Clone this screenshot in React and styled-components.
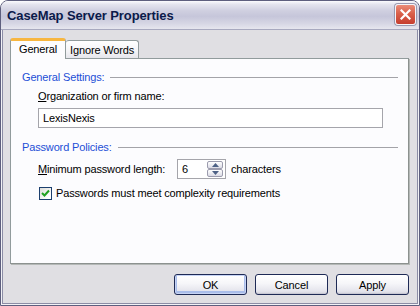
import React, {useState} from 'react';
import styled, {createGlobalStyle} from 'styled-components';

const GlobalStyle = createGlobalStyle`
  html, body {
    margin: 0;
    padding: 0;
    background: #ffffff;
  }
  body {
    font-family: "Liberation Sans", Arial, sans-serif;
    font-size: 11px;
    letter-spacing: -0.15px;
    color: #000;
  }
`

const Window = styled.div`
  width: 420px;
  height: 306px;
  box-sizing: border-box;
  display: flex;
  flex-direction: column;
  border: 1px solid #5e5f7e;
  border-radius: 8px 8px 0 0;
  overflow: hidden;
  background: #e8e8f0;
`

const TitleBar = styled.div`
  height: 28px;
  flex: none;
  display: flex;
  align-items: center;
  justify-content: space-between;
  padding: 0 3px 0 6px;
  background: linear-gradient(to bottom, #fbfbfd 0%, #e4e4ee 12%, #cfcfe0 35%, #c6c6da 55%, #d6d6e4 80%, #e6e6ee 100%);
  border-bottom: 1px solid #a8a9bf;
`

const Title = styled.span`
  font-family: "Liberation Sans", Arial, sans-serif;
  font-weight: bold;
  font-size: 13px;
  color: #0b1a4a;
  letter-spacing: -0.1px;
  padding-top: 1px;
`

const CloseButton = styled.div`
  width: 21px;
  height: 21px;
  box-sizing: border-box;
  border: 1px solid #f4f4f8;
  border-radius: 3px;
  background: linear-gradient(to bottom, #eb8c78 0%, #d9604a 45%, #c63e2f 100%);
  box-shadow: 0 0 0 1px #9a9ab0;
  display: flex;
  align-items: center;
  justify-content: center;
  margin-top: -2px;
`

const Frame = styled.div`
  flex: 1;
  display: flex;
  padding: 0 1px 1px;
  background: #f2f2f6;
`

const Client = styled.div`
  flex: 1;
  display: flex;
  flex-direction: column;
  background: #e0dfe3;
  border: 1px solid #8c8da6;
  border-top: none;
  padding: 8px 8px 8px 7px;
`

const TabStrip = styled.div`
  display: flex;
  align-items: flex-end;
  height: 21px;
  position: relative;
  z-index: 1;
  margin-bottom: -1px;
`

const Tab = styled.div`
  box-sizing: border-box;
  display: flex;
  align-items: center;
  justify-content: center;
  border: 1px solid #919b9c;
  border-bottom: none;
  border-radius: 3px 3px 0 0;
  height: ${p => p.$active ? '21px' : '18px'};
  padding: ${p => p.$active ? '0 8px 3px' : '0 4px'};
  background: ${p => p.$active
    ? '#fcfcfe'
    : 'linear-gradient(to bottom, #ffffff 0%, #f3f3f6 60%, #e6e6ec 100%)'};
  border-top: ${p => p.$active ? '3px solid #f7b640' : '1px solid #919b9c'};
  margin-bottom: ${p => p.$active ? '0' : '1px'};
  ${p => !p.$active && 'border-left: none;'}
`

const Panel = styled.div`
  height: 206px;
  box-sizing: border-box;
  background: #fcfcfe;
  border: 1px solid #919b9c;
  border-right-color: #8c918f;
  border-bottom-color: #8c918f;
  box-shadow: 1px 1px 0 #b4b8b6;
  padding: 11px 10px 0 11px;
  display: flex;
  flex-direction: column;
`

const GroupHeader = styled.div`
  display: flex;
  align-items: center;
  gap: 6px;
  line-height: 14px;
  color: #1d4fd6;
  margin-top: ${p => p.$gap || 0}px;
`

const GroupLine = styled.div`
  flex: 1;
  height: 1px;
  background: #a3a3a8;
`

const Indented = styled.div`
  padding-left: 16px;
  display: flex;
  flex-direction: column;
`

const Label = styled.label`
  line-height: 14px;
  margin-top: 5px;
  width: ${p => p.$width ? p.$width + 'px' : 'auto'};
  flex: none;
  u { text-decoration: underline; }
`

const TextBox = styled.input`
  box-sizing: border-box;
  width: 345px;
  height: 20px;
  margin-top: 5px;
  border: 1px solid #a5a5ab;
  background: #ffffff;
  font-family: "Liberation Sans", Arial, sans-serif;
  font-size: 11px;
  letter-spacing: -0.15px;
  padding: 0 4px;
  outline: none;
`

const Row = styled.div`
  display: flex;
  align-items: center;
  margin-top: ${p => p.$gap || 0}px;
  height: ${p => p.$h || 14}px;
`

const SpinBox = styled.div`
  box-sizing: border-box;
  width: 49px;
  height: 20px;
  border: 1px solid #a5a5ab;
  background: #ffffff;
  display: flex;
  align-items: center;
  padding: 1px 2px 1px 4px;
  gap: 2px;
`

const SpinValue = styled.span`
  flex: 1;
`

const SpinButtons = styled.div`
  display: flex;
  flex-direction: column;
`

const SpinButton = styled.div`
  box-sizing: border-box;
  width: 16px;
  height: 8px;
  border: 1px solid #9c9cae;
  border-radius: 2px;
  background: linear-gradient(to bottom, #ffffff, #dcdce6);
  display: flex;
  align-items: center;
  justify-content: center;
`

const Suffix = styled.span`
  margin-left: 5px;
`

const CheckBox = styled.div`
  box-sizing: border-box;
  width: 13px;
  height: 13px;
  border: 1px solid #1c3f6e;
  background: linear-gradient(135deg, #dcdcd7 0%, #ffffff 80%);
  margin: 0 4px 0 1px;
  display: flex;
  align-items: center;
  justify-content: center;
`

const ButtonBar = styled.div`
  display: flex;
  justify-content: flex-end;
  gap: 8px;
  margin-top: 10px;
`

const PushButton = styled.button`
  box-sizing: border-box;
  width: 73px;
  height: 21px;
  border: 1px solid #1e2a55;
  border-radius: 3px;
  background: linear-gradient(to bottom, #ffffff 0%, #f6f6f9 45%, #e4e4ec 85%, #d2d2dc 100%);
  font-family: "Liberation Sans", Arial, sans-serif;
  font-size: 11px;
  letter-spacing: -0.15px;
  color: #000;
  padding: 0;
  box-shadow: ${p => p.$default
    ? 'inset 0 0 0 1px #c6d3f4, inset 0 -1px 0 2px #a9bdea'
    : 'inset 0 -1px 0 #c8c8d4'};
`

const App = () => {
  const [firm, setFirm] = useState('LexisNexis')

  return (
    <>
      <GlobalStyle/>
      <Window>
        <TitleBar>
          <Title>CaseMap Server Properties</Title>
          <CloseButton>
            <svg width="11" height="11" viewBox="0 0 11 11">
              <path d="M1.5 1.5 L9.5 9.5 M9.5 1.5 L1.5 9.5" stroke="#ffffff" strokeWidth="2.2" strokeLinecap="square"/>
            </svg>
          </CloseButton>
        </TitleBar>
        <Frame>
          <Client>
            <TabStrip>
              <Tab $active>General</Tab>
              <Tab>Ignore Words</Tab>
            </TabStrip>
            <Panel>
              <GroupHeader>General Settings:<GroupLine/></GroupHeader>
              <Indented>
                <Label><u>O</u>rganization or firm name:</Label>
                <TextBox value={firm} onChange={(e)=> setFirm(e.target.value)}/>
              </Indented>
              <GroupHeader $gap={12}>Password Policies:<GroupLine/></GroupHeader>
              <Indented>
                <Row $gap={5} $h={20}>
                  <Label $width={139} style={{marginTop: 0}}><u>M</u>inimum password length:</Label>
                  <SpinBox>
                    <SpinValue>6</SpinValue>
                    <SpinButtons>
                      <SpinButton>
                        <svg width="7" height="4" viewBox="0 0 7 4"><path d="M0 4 L3.5 0 L7 4 Z" fill="#4d6185"/></svg>
                      </SpinButton>
                      <SpinButton>
                        <svg width="7" height="4" viewBox="0 0 7 4"><path d="M0 0 L3.5 4 L7 0 Z" fill="#4d6185"/></svg>
                      </SpinButton>
                    </SpinButtons>
                  </SpinBox>
                  <Suffix>characters</Suffix>
                </Row>
                <Row $gap={7}>
                  <CheckBox>
                    <svg width="9" height="9" viewBox="0 0 9 9">
                      <path d="M1 4 L3.5 6.5 L8 1.5" stroke="#21a121" strokeWidth="2" fill="none"/>
                    </svg>
                  </CheckBox>
                  <span>Passwords must meet complexity requirements</span>
                </Row>
              </Indented>
            </Panel>
            <ButtonBar>
              <PushButton $default>OK</PushButton>
              <PushButton>Cancel</PushButton>
              <PushButton>Apply</PushButton>
            </ButtonBar>
          </Client>
        </Frame>
      </Window>
    </>
  );
}

export default App;
